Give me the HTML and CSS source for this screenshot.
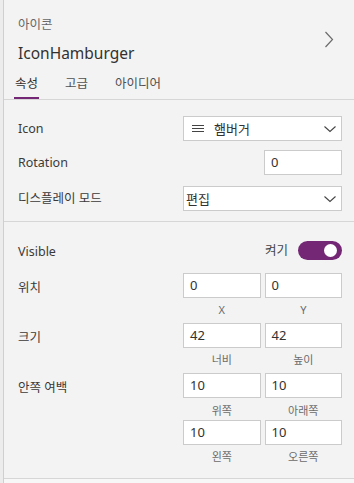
FILE: index.html
```html
<!DOCTYPE html>
<html lang="ko">
<head>
<meta charset="utf-8">
<link rel="stylesheet" href="styles.css">
</head>
<body>
<div class="panel">
  <header class="head">
    <div class="head-text">
      <div class="kind">아이콘</div>
      <div class="name">IconHamburger</div>
    </div>
    <svg class="head-chev" width="10" height="17" viewBox="0 0 10 17"><polyline points="1.5,1 8.5,8.5 1.5,16" fill="none" stroke="#6b6b6b" stroke-width="1.2"/></svg>
  </header>
  <nav class="tabs">
    <span class="tab active">속성</span>
    <span class="tab">고급</span>
    <span class="tab">아이디어</span>
  </nav>
  <section class="sec sec1">
    <div class="row r-icon">
      <span class="lbl">Icon</span>
      <div class="select">
        <svg class="ham" width="12" height="9" viewBox="0 0 12 9"><path d="M0 1.5H12M0 4.5H12M0 7.5H12" stroke="#444" stroke-width="1.1"/></svg>
        <span class="sel-text">햄버거</span>
        <svg class="chev" width="14" height="8" viewBox="0 0 14 8"><polyline points="1.5,1.5 7,6.5 12.5,1.5" fill="none" stroke="#444" stroke-width="1.1"/></svg>
      </div>
    </div>
    <div class="row r-rot">
      <span class="lbl">Rotation</span>
      <div class="input small">0</div>
    </div>
    <div class="row r-mode">
      <span class="lbl">디스플레이 모드</span>
      <div class="select">
        <span class="sel-text plain">편집</span>
        <svg class="chev" width="14" height="8" viewBox="0 0 14 8"><polyline points="1.5,1.5 7,6.5 12.5,1.5" fill="none" stroke="#444" stroke-width="1.1"/></svg>
      </div>
    </div>
  </section>
  <section class="sec sec2">
    <div class="row r-vis">
      <span class="lbl">Visible</span>
      <div class="toggle-wrap">
        <span class="toggle-text">켜기</span>
        <span class="toggle"><span class="knob"></span></span>
      </div>
    </div>
    <div class="grp g-pos">
      <span class="lbl">위치</span>
      <div class="pair">
        <div class="input">0</div><div class="input">0</div>
        <div class="sub">X</div><div class="sub">Y</div>
      </div>
    </div>
    <div class="grp">
      <span class="lbl">크기</span>
      <div class="pair">
        <div class="input">42</div><div class="input">42</div>
        <div class="sub">너비</div><div class="sub">높이</div>
      </div>
    </div>
    <div class="grp">
      <span class="lbl">안쪽 여백</span>
      <div class="pair">
        <div class="input">10</div><div class="input">10</div>
        <div class="sub tight">위쪽</div><div class="sub tight">아래쪽</div>
        <div class="input">10</div><div class="input">10</div>
        <div class="sub">왼쪽</div><div class="sub">오른쪽</div>
      </div>
    </div>
  </section>
  <div class="tail"></div>
</div>
</body>
</html>
```

FILE: styles.css
```css
html, body {
  margin: 0;
  padding: 0;
  height: 100%;
}
body {
  background: #ececec;
  font-family: "Noto Sans", "Noto Sans CJK KR", sans-serif;
  color: #323130;
  overflow: hidden;
}
.panel {
  margin-left: 3px;
  border-left: 1px solid #cfcfcf;
  background: #f3f3f3;
  height: 483px;
  box-sizing: border-box;
}
.head {
  display: flex;
  justify-content: space-between;
  align-items: flex-start;
  padding: 16px 20px 0 14px;
}
.kind {
  font-family: "Noto Sans CJK KR", sans-serif;
  font-size: 12.5px;
  line-height: 16px;
  color: #666;
}
.name {
  margin-top: 11px;
  font-size: 15.5px;
  line-height: 20px;
  color: #323130;
}
.head-chev {
  margin-top: 15px;
}
.tabs {
  display: flex;
  gap: 25px;
  padding: 10px 0 0 10px;
  border-bottom: 1px solid #d6d6d6;
}
.tab {
  font-family: "Noto Sans CJK KR", sans-serif;
  font-size: 12.5px;
  line-height: 20px;
  padding: 0 1px 4px;
  border-bottom: 2px solid transparent;
  color: #505050;
}
.tab.active {
  border-bottom-color: #742774;
  color: #323130;
}
.sec {
  padding: 0 12px 0 14px;
  border-bottom: 1px solid #d6d6d6;
}
.sec1 {
  padding-top: 16px;
  padding-bottom: 10px;
}
.row {
  display: flex;
  align-items: center;
  justify-content: space-between;
  height: 25px;
}
.r-rot { margin-top: 9px; }
.r-mode { margin-top: 11px; }
.lbl {
  font-family: "Noto Sans", "Noto Sans CJK KR", sans-serif;
  font-size: 12.5px;
  line-height: 18px;
  color: #3b3a39;
}
.select {
  width: 159px;
  height: 25px;
  box-sizing: border-box;
  border: 1px solid #cbcbcb;
  background: #fff;
  display: flex;
  align-items: center;
  padding: 0 4px 0 8px;
}
.ham { margin-right: 10px; }
.sel-text {
  font-family: "Noto Sans CJK KR", sans-serif;
  font-size: 13px;
  line-height: 18px;
  font-weight: 400;
  color: #323130;
  flex: 1;
}
.sel-text.plain { margin-left: -6px; }
.input {
  height: 25px;
  box-sizing: border-box;
  border: 1px solid #cbcbcb;
  background: #fff;
  padding: 0 6px;
  font-size: 13px;
  line-height: 23px;
  color: #323130;
}
.input.small { width: 78px; }
.sec2 {
  padding-top: 17px;
  padding-bottom: 8px;
}
.r-vis { height: 22px; }
.r-vis .lbl { margin-top: 4px; }
.toggle-wrap {
  display: flex;
  align-items: center;
  gap: 10px;
}
.toggle-text {
  font-family: "Noto Sans CJK KR", sans-serif;
  font-size: 12.5px;
  line-height: 18px;
  color: #444;
}
.toggle {
  width: 44px;
  height: 19px;
  border-radius: 10px;
  background: #742774;
  display: flex;
  align-items: center;
  justify-content: flex-end;
  padding-right: 5px;
  box-sizing: border-box;
}
.knob {
  width: 13px;
  height: 13px;
  border-radius: 50%;
  background: #fff;
}
.grp {
  display: flex;
  justify-content: space-between;
  align-items: flex-start;
}
.g-pos { margin-top: 12px; }
.grp .lbl { margin-top: 6px; }
.pair {
  width: 159px;
  display: grid;
  grid-template-columns: 1fr 1fr;
  column-gap: 4px;
}
.sub {
  height: 25px;
  text-align: center;
  font-family: "Noto Sans", "Noto Sans CJK KR", sans-serif;
  font-size: 11px;
  line-height: 23px;
  color: #6b6b6b;
}
.sub.tight { height: 22px; line-height: 25px; }
.tail {
  height: 6px;
  background: #f7f7f7;
}
```
